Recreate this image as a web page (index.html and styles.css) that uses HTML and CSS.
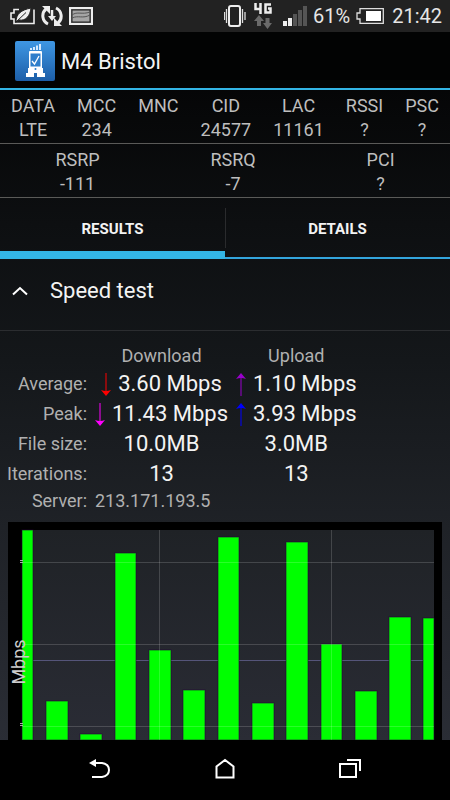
FILE: index.html
```
<!DOCTYPE html>
<html lang="en">
<head>
    <meta charset="UTF-8">
    <meta name="viewport" content="width=device-width, initial-scale=1.0">
    <title>M4 Bristol</title>
    <link rel="stylesheet" href="styles.css">
</head>

<body>
    <div class="status-bar">
        <div class="status-left">
            <svg width="25" height="18" viewBox="0 0 25 18">
                <path d="M9 2.500H4V6H1V12H4V16.500H24V2.500" fill="none" stroke="#eee" stroke-width="1.6" />
                <path d="M6 15C6 7 11 3 21 1C20 9 16 14 9 13L6 15Z" fill="#eee" stroke="#222" stroke-width="1" />
                <path d="M5.500 15.500L16 5.500" stroke="#222" stroke-width="1" />
            </svg>
            <svg width="22" height="22" viewBox="0 0 22 22">
                <path d="M7 19A9 9 0 0 1 5 4M15 3A9 9 0 0 1 17 18" fill="none" stroke="#eee" stroke-width="3" />
                <path d="M1 1H9V9ZM21 21H13V13Z" fill="#eee" />
                <path d="M11 5V12" stroke="#eee" stroke-width="2.5" />
                <path d="M7 11H15L11 16Z" fill="#eee" />
            </svg>
            <svg width="24" height="18" viewBox="0 0 24 18">
                <rect x="1" y="1" width="22" height="16" fill="#666" stroke="#eee" stroke-width="2" />
                <rect x="3" y="3" width="18" height="12" fill="#a5a5a5" stroke="#222" stroke-width="1" />
                <path d="M3 8C8 4 13 8 21 5M3 11C9 8 14 12 21 8" fill="none" stroke="#555" />
            </svg>
        </div>
        <div class="status-right">
            <svg width="22" height="22" viewBox="0 0 22 22">
                <rect x="5" y="1" width="11" height="20" rx="2" fill="none" stroke="#eee" stroke-width="2" />
                <path d="M2.5 4V18M18.5 4V18M.5 7V15M21 7V15" stroke="#ddd" stroke-width="1.3" />
            </svg>
            <svg class="network" width="18" height="26" viewBox="0 0 18 26">
                <path d="M1.5 0V6H7M6.500 0V11M17 1.500H11.500V9.500H16.500V5.500H14" fill="none" stroke="#eee" stroke-width="2.500" />
                <path d="M5 12L10 18H7V23H3V18H0ZM13.500 26L18 20H15.500V15H11.500V20H9Z" fill="#6a6a6a" />
            </svg>
            <svg class="signal" width="24" height="20" viewBox="0 0 24 20">
                <path d="M0 15h4v5H0zM5 12h4v8H5z" fill="#eee" />
                <path d="M10 8h4v12h-4zM15 4h4v16h-4zM20 0h4v20h-4z" fill="#555" />
            </svg>
            <span class="status-text">61%</span>
            <svg width="28" height="16" viewBox="0 0 28 16">
                <path d="M4 .7H27.300V15.300H4V11H1V5H4Z" fill="none" stroke="#ddd" stroke-width="1.3" />
                <rect x="10" y="3" width="15" height="10" fill="#fff" />
            </svg>
            <span class="status-text">21:42</span>
        </div>
    </div>

    <header class="app-bar">
        <svg width="40" height="40" viewBox="0 0 40 40">
            <defs>
                <linearGradient id="logoBlue" x1="0" y1="0" x2="0" y2="1">
                    <stop offset="0%" stop-color="#3f97e3" />
                    <stop offset="100%" stop-color="#1c5ea8" />
                </linearGradient>
            </defs>
            <rect width="40" height="40" rx="2" fill="url(#logoBlue)" />
            <path d="M15 7h2v2h-2zM18 6h2v3h-2zM21 4.500h2V9h-2zM24 3h2v6h-2z" fill="#d5eaff" />
            <path d="M15 10H26Q27 10 27 11V27H28V32H30V36H22V32H19V36H11V32H13V27H14V11Q14 10 15 10Z" fill="#fff" />
            <rect x="15.500" y="12.500" width="10" height="13" fill="#2e7ecb" />
            <path d="M17 20L19.500 23L24 15" fill="none" stroke="#fff" stroke-width="1.300" />
            <circle cx="20.500" cy="28" r="1" fill="#2e7ecb" />
        </svg>
        <h1>M4 Bristol</h1>
    </header>

    <main>
        <dl class="info-row">
            <div><dt>DATA</dt><dd>LTE</dd></div>
            <div><dt>MCC</dt><dd>234</dd></div>
            <div><dt>MNC</dt><dd></dd></div>
            <div><dt>CID</dt><dd>24577</dd></div>
            <div><dt>LAC</dt><dd>11161</dd></div>
            <div><dt>RSSI</dt><dd>?</dd></div>
            <div><dt>PSC</dt><dd>?</dd></div>
        </dl>
        <dl class="info-row">
            <div><dt>RSRP</dt><dd>-111</dd></div>
            <div><dt>RSRQ</dt><dd>-7</dd></div>
            <div><dt>PCI</dt><dd>?</dd></div>
        </dl>

        <div class="tabs" role="tablist">
            <button class="tab active" role="tab" aria-selected="true">RESULTS</button>
            <button class="tab" role="tab" aria-selected="false">DETAILS</button>
        </div>

        <button class="section-toggle" aria-expanded="true">
            <svg width="16" height="10" viewBox="0 0 16 10">
                <path d="M1 8.500L8 2L15 8.500" fill="none" stroke="#fff" stroke-width="2" />
            </svg>
            Speed test
        </button>

        <table class="results">
            <thead>
                <tr>
                    <td></td>
                    <th scope="col">Download</th>
                    <th scope="col">Upload</th>
                </tr>
            </thead>
            <tbody>
                <tr>
                    <th scope="row">Average:</th>
                    <td><svg class="arrow red" viewBox="0 0 10 23"><path d="M5 0V21" /><path class="head" d="M0 17Q5 19 10 17L5 23Z" /></svg>3.60 Mbps</td>
                    <td><svg class="arrow purple" viewBox="0 0 10 23"><path d="M5 23V2" /><path class="head" d="M0 6Q5 4 10 6L5 0Z" /></svg>1.10 Mbps</td>
                </tr>
                <tr>
                    <th scope="row">Peak:</th>
                    <td><svg class="arrow magenta" viewBox="0 0 10 23"><path d="M5 0V21" /><path class="head" d="M0 17Q5 19 10 17L5 23Z" /></svg>11.43 Mbps</td>
                    <td><svg class="arrow blue" viewBox="0 0 10 23"><path d="M5 23V2" /><path class="head" d="M0 6Q5 4 10 6L5 0Z" /></svg>3.93 Mbps</td>
                </tr>
                <tr>
                    <th scope="row">File size:</th>
                    <td>10.0MB</td>
                    <td>3.0MB</td>
                </tr>
                <tr>
                    <th scope="row">Iterations:</th>
                    <td>13</td>
                    <td>13</td>
                </tr>
                <tr class="server">
                    <th scope="row">Server:</th>
                    <td colspan="2">213.171.193.5</td>
                </tr>
            </tbody>
        </table>

        <div class="chart-container">
            <svg class="chart" viewBox="0 0 434 218" role="img" aria-label="Speed in Mbps">
                <defs>
                    <linearGradient id="plotFill" x1="0" y1="0" x2="0" y2="1">
                        <stop offset="0%" stop-color="#1f2226" />
                        <stop offset="100%" stop-color="#2a2c35" />
                    </linearGradient>
                </defs>
                <rect width="434" height="218" fill="#000" />
                <rect x="14" y="8" width="412" height="210" fill="url(#plotFill)" />
                <path class="average" d="M14 138.500H426" />
                <g class="bars">
                    <rect x="14" y="8" width="11" height="210" />
                    <rect x="38" y="179" width="22" height="39" />
                    <rect x="72" y="212" width="22" height="6" />
                    <rect x="107" y="31" width="21" height="187" />
                    <rect x="141" y="128" width="22" height="90" />
                    <rect x="175" y="168" width="22" height="50" />
                    <rect x="210" y="15" width="21" height="203" />
                    <rect x="244" y="181" width="22" height="37" />
                    <rect x="278" y="20" width="22" height="198" />
                    <rect x="313" y="122" width="21" height="96" />
                    <rect x="347" y="169" width="22" height="49" />
                    <rect x="381" y="95" width="22" height="123" />
                    <rect x="415" y="96" width="11" height="122" />
                </g>
                <path class="grid" d="M14 40.500H426M14 122.500H426M14 204.500H426M151.500 8V218M323.500 8V218" />
                <path class="ticks" d="M12 38.500H15M12 40.500H15M12 201.500H15M12 203.500H15" />
                <text class="axis-label" transform="translate(17 140) rotate(-90)" text-anchor="middle">Mbps</text>
            </svg>
        </div>
    </main>

    <nav class="nav-bar">
        <button aria-label="Back">
            <svg width="24" height="22" viewBox="0 0 24 22">
                <path d="M5 5H14Q21 6 21 12T14 19H4" fill="none" stroke="#fff" stroke-width="2" />
                <path d="M1 5L8 1V9Z" fill="#fff" />
            </svg>
        </button>
        <button aria-label="Home">
            <svg width="24" height="22" viewBox="0 0 24 22">
                <path d="M3.500 19.500V8.500L12 2L20.500 8.500V19.500Z" fill="none" stroke="#fff" stroke-width="2" />
            </svg>
        </button>
        <button aria-label="Recent apps">
            <svg width="24" height="22" viewBox="0 0 24 22">
                <rect x="2" y="6" width="16" height="13" fill="none" stroke="#fff" stroke-width="2" />
                <path d="M9 2H22V13" fill="none" stroke="#fff" stroke-width="2" />
            </svg>
        </button>
    </nav>
</body>
</html>
```
FILE: styles.css
```
* {
    margin: 0;
    padding: 0;
    box-sizing: border-box;
}

body {
    display: flex;
    flex-direction: column;
    height: 100vh;
    overflow: hidden;
    background: linear-gradient(#000 0%, #0d0f11 28%, #14171a 45%, #1f2227 66%, #2a2d35 93%);
    color: #f3f3f3;
    font-family: Roboto, sans-serif;
    font-size: 18px;
}

button {
    border: none;
    background: none;
    color: inherit;
    font-family: inherit;
}

.status-bar {
    flex: none;
    display: flex;
    align-items: center;
    justify-content: space-between;
    height: 32px;
    padding: 0 8px 0 10px;
    background: #222;
}

.status-left,
.status-right {
    display: flex;
    align-items: center;
    gap: 6px;
}

.status-right svg {
    margin-right: 2px;
}

.status-right .network {
    margin-right: 5px;
}

.status-right .signal {
    margin-right: 0;
}

.status-text {
    font-size: 20px;
    color: #e6e6e6;
}

.app-bar {
    flex: none;
    display: flex;
    align-items: center;
    gap: 6px;
    height: 58px;
    padding: 2px 15px 0;
    border-bottom: 2px solid #33b5e5;
    background: #020303;
}

.app-bar h1 {
    font-size: 22px;
    font-weight: 400;
}

main {
    flex: 1;
    min-height: 0;
    overflow: hidden;
}

.info-row {
    display: flex;
    padding: 4px 0 1px;
    border-bottom: 1px solid #5a5a58;
    color: #bebebe;
    line-height: 24px;
    text-align: center;
}

.info-row div {
    flex: 1 1 auto;
}

.tabs {
    display: flex;
    height: 61px;
}

.tab {
    flex: 1;
    padding-top: 2px;
    border-bottom: 2px solid #33a5dc;
    font-size: 15px;
    font-weight: 700;
    background: linear-gradient(#2a2b2d, #2a2b2d) 0 10px / 1px 40px no-repeat;
}

.tab.active {
    padding-top: 8px;
    border-bottom: 8px solid #33b5e5;
    background: none;
}

.section-toggle {
    display: flex;
    align-items: center;
    gap: 22px;
    width: 100%;
    height: 72px;
    padding: 0 12px 8px;
    border-bottom: 1px solid #2b2d30;
    font-size: 22px;
}

.results {
    margin: 12px 0 9px 3px;
    border-collapse: collapse;
    white-space: nowrap;
}

.results th {
    padding: 0 4px;
    color: #b0b0b0;
    font-weight: 400;
    line-height: 26px;
}

.results tbody th {
    text-align: right;
}

.results td {
    padding: 0 4px;
    font-size: 22px;
    line-height: 30px;
    text-align: center;
}

.results .server th,
.results .server td {
    color: #b0b0b0;
    font-size: 18px;
    line-height: 24px;
}

.results .server td {
    text-align: left;
}

.arrow {
    width: 10px;
    height: 23px;
    margin-right: 7px;
    vertical-align: -5px;
    fill: none;
    stroke: currentColor;
}

.arrow .head {
    fill: currentColor;
    stroke: none;
}

.red {
    color: #f00;
}

.magenta {
    color: #f0f;
}

.purple {
    color: #90c;
}

.blue {
    color: #00f;
}

.chart-container {
    padding: 0 8px;
}

.chart {
    display: block;
    width: 100%;
}

.bars rect {
    fill: #0f0;
    stroke: #26003a;
    stroke-opacity: 0.6;
}

.grid {
    fill: none;
    stroke: #fff;
    stroke-opacity: 0.16;
}

.average {
    stroke: #55557a;
}

.ticks {
    stroke: #aaa;
}

.axis-label {
    fill: #ccc;
    font-size: 18px;
}

.nav-bar {
    flex: none;
    display: flex;
    justify-content: center;
    gap: 101px;
    height: 60px;
    background: #000;
}
```
